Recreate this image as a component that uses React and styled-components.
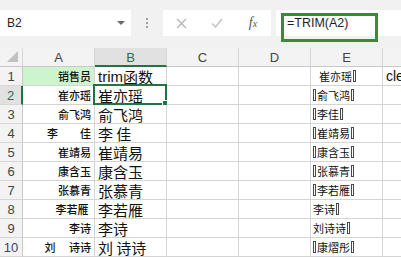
import React from 'react';
import styled, { createGlobalStyle } from 'styled-components';

const GREEN = '#217346';
const LINE = '#d4d4d4';

const GlobalStyle = createGlobalStyle`
  html, body {
    margin: 0;
    padding: 0;
    background: #ffffff;
  }
  body {
    width: 401px;
    height: 257px;
    overflow: hidden;
    font-family: "Liberation Sans", "Noto Sans CJK SC", sans-serif;
  }
`;

const Window = styled.div`
  width: 401px;
  height: 257px;
  overflow: hidden;
  display: flex;
  flex-direction: column;
`;

const FormulaBar = styled.div`
  height: 48px;
  flex-shrink: 0;
  box-sizing: border-box;
  padding-top: 10px;
  background: #f1f1f1;
  display: flex;
  align-items: flex-start;
`;

const NameBox = styled.div`
  width: 131px;
  height: 26px;
  box-sizing: border-box;
  padding: 0 6px 0 7px;
  background: #ffffff;
  display: flex;
  align-items: center;
  justify-content: space-between;
  font-size: 12px;
  color: #262626;
`;

const Caret = styled.span`
  width: 0;
  height: 0;
  border-left: 4px solid transparent;
  border-right: 4px solid transparent;
  border-top: 4px solid #6a6a6a;
`;

const Grip = styled.div`
  width: 32px;
  height: 26px;
  display: flex;
  flex-direction: column;
  align-items: center;
  justify-content: center;
  gap: 2px;
  span {
    width: 2px;
    height: 2px;
    background: #a0a0a0;
  }
`;

const ButtonBox = styled.div`
  width: 108px;
  height: 26px;
  background: #ffffff;
  display: flex;
`;

const BarButton = styled.div`
  width: 36px;
  height: 26px;
  display: flex;
  align-items: center;
  justify-content: center;
`;

const Fx = styled.span`
  font-family: "Liberation Serif", serif;
  font-style: italic;
  font-size: 14px;
  color: #555555;
  sub {
    font-size: 10px;
    vertical-align: 0;
  }
`;

const FormulaInput = styled.div`
  flex: 1;
  height: 26px;
  margin-left: 5px;
  position: relative;
  background: #ffffff;
  box-sizing: border-box;
  padding-left: 11px;
  display: flex;
  align-items: center;
  font-size: 12.5px;
  color: #1e1e1e;
`;

const Highlight = styled.div`
  position: absolute;
  left: 5px;
  top: 3px;
  width: 97px;
  height: 29px;
  box-sizing: border-box;
  border: 3px solid #3b8a3b;
`;

const Sheet = styled.div`
  display: grid;
  grid-template-columns: 23px repeat(6, 72px);
  grid-auto-rows: 19px;
`;

const ColHead = styled.div`
  box-sizing: border-box;
  background: ${p => (p.$active ? '#e1e1e1' : '#f3f3f3')};
  border-right: 1px solid #d6d6d6;
  border-bottom: ${p => (p.$active ? `2px solid ${GREEN}` : '1px solid #c8c8c8')};
  color: ${p => (p.$active ? GREEN : '#444444')};
  font-size: 13px;
  display: flex;
  align-items: center;
  justify-content: center;
  padding-top: ${p => (p.$active ? '1px' : '0')};
`;

const Corner = styled(ColHead)`
  position: relative;
  &::after {
    content: '';
    position: absolute;
    right: 4px;
    bottom: 4px;
    width: 11px;
    height: 11px;
    background: #c0c0c0;
    clip-path: polygon(100% 0, 100% 100%, 0 100%);
  }
`;

const RowHead = styled.div`
  box-sizing: border-box;
  background: ${p => (p.$active ? '#e1e1e1' : '#f3f3f3')};
  border-right: ${p => (p.$active ? `2px solid ${GREEN}` : '1px solid #c8c8c8')};
  border-bottom: 1px solid #d6d6d6;
  color: ${p => (p.$active ? GREEN : '#444444')};
  font-size: 13px;
  display: flex;
  align-items: center;
  justify-content: center;
`;

const Cell = styled.div`
  position: relative;
  box-sizing: border-box;
  border-right: 1px solid ${LINE};
  border-bottom: 1px solid ${LINE};
  background: ${p => p.$bg || '#ffffff'};
  display: flex;
  align-items: center;
  justify-content: ${p => (p.$align === 'right' ? 'flex-end' : 'flex-start')};
  padding: 0 ${p => (p.$align === 'right' ? '3px' : '0')} 0 ${p => p.$indent || '2px'};
  font-family: "Noto Sans CJK SC", "Liberation Sans", sans-serif;
  font-size: ${p => p.$size || '11px'};
  font-weight: ${p => p.$weight || 400};
  color: #111111;
  white-space: pre;
  overflow: visible;
  line-height: 1;
`;

const Selection = styled.div`
  position: absolute;
  left: -2px;
  top: -2px;
  right: -1px;
  bottom: -1px;
  border: 2px solid ${GREEN};
  pointer-events: none;
  &::after {
    content: '';
    position: absolute;
    right: -4px;
    bottom: -4px;
    width: 5px;
    height: 5px;
    background: ${GREEN};
    border: 1px solid #ffffff;
  }
`;

const Mark = styled.span`
  display: inline-block;
  width: 1px;
  height: 10px;
  border: 1px solid #4a4a4a;
  margin: 0 ${p => (p.$end ? '0' : '1px')} 0 ${p => (p.$end ? '1px' : '0')};
  vertical-align: middle;
`;

const Latin = styled.span`
  font-family: "Liberation Sans", sans-serif;
`;

const cols = ['A', 'B', 'C', 'D', 'E', 'F'];

const rows = [
  { a: '销售员', b: 'trim函数', e: ['', '崔亦瑶', 'R'], f: 'cle', bg: '#cdf5cd' },
  { a: '崔亦瑶', b: '崔亦瑶', e: ['L', '俞飞鸿', 'R'] },
  { a: '俞飞鸿', b: '俞飞鸿', e: ['L', '李佳', 'R'] },
  { a: '李　　佳', b: '李 佳', e: ['L', '崔靖易', 'R'] },
  { a: '崔靖易', b: '崔靖易', e: ['L', '康含玉', 'R'] },
  { a: '康含玉', b: '康含玉', e: ['L', '张慕青', 'R'] },
  { a: '张慕青', b: '张慕青', e: ['L', '李若雁', 'R'] },
  { a: '李若雁 ', b: '李若雁', e: ['', '李诗', 'R'] },
  { a: '李诗', b: '李诗', e: ['', '刘诗诗', 'R'] },
  { a: '刘　 诗诗', b: '刘 诗诗', e: ['L', '康熠彤', 'R'] },
];

function ETag({ parts, first }) {
  return (
    <Cell $indent={first ? '8px' : '2px'} $size="11px">
      {parts[0] && <Mark />}
      {parts[1]}
      {parts[2] && <Mark $end />}
    </Cell>
  );
}

function BText({ text }) {
  if (text.startsWith('trim')) {
    return (
      <>
        <Latin>trim</Latin>函数
      </>
    );
  }
  return text;
}

export default function App() {
  return (
    <Window>
      <GlobalStyle />
      <FormulaBar>
        <NameBox>
          B2
          <Caret />
        </NameBox>
        <Grip>
          <span />
          <span />
          <span />
        </Grip>
        <ButtonBox>
          <BarButton>
            <svg width="11" height="11" viewBox="0 0 11 11">
              <path d="M1 1 L10 10 M10 1 L1 10" stroke="#b4b4b4" strokeWidth="1.3" fill="none" />
            </svg>
          </BarButton>
          <BarButton>
            <svg width="12" height="10" viewBox="0 0 12 10">
              <path d="M1 5.5 L4.5 9 L11 1" stroke="#c4c4c4" strokeWidth="1.5" fill="none" />
            </svg>
          </BarButton>
          <BarButton>
            <Fx>
              f<sub>x</sub>
            </Fx>
          </BarButton>
        </ButtonBox>
        <FormulaInput>
          =TRIM(A2)
          <Highlight />
        </FormulaInput>
      </FormulaBar>
      <Sheet>
        <Corner />
        {cols.map(c => (
          <ColHead key={c} $active={c === 'B'}>
            {c}
          </ColHead>
        ))}
        {rows.map((r, i) => (
          <React.Fragment key={i}>
            <RowHead $active={i === 1}>{i + 1}</RowHead>
            <Cell $align="right" $bg={r.bg} $weight={500}>
              {r.a}
            </Cell>
            <Cell $size="15px" $indent="3px">
              <BText text={r.b} />
              {i === 1 && <Selection />}
            </Cell>
            <Cell />
            <Cell />
            <ETag parts={r.e} first={i === 0} />
            <Cell $size="14px" $indent="3px">
              {r.f && <Latin>{r.f}</Latin>}
            </Cell>
          </React.Fragment>
        ))}
      </Sheet>
    </Window>
  );
}
